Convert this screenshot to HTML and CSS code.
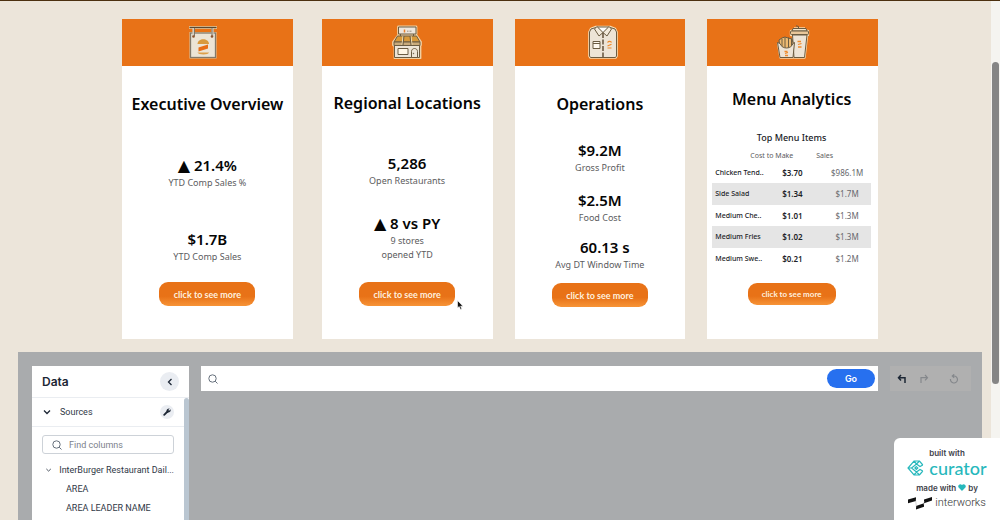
FILE: index.html
```html
<!DOCTYPE html>
<html lang="en">
<head>
<meta charset="utf-8">
<title>InterBurger Dashboard</title>
<link rel="stylesheet" href="styles.css">
</head>
<body>
<main class="page">
  <section class="cards">
    <article class="card card-executive">
      <header class="card-head">
        <svg width="30" height="34" viewBox="0 0 30 34" aria-hidden="true">
          <path d="M1 2.500h28" stroke="#f0c795" stroke-width="3"/>
          <path d="M1.500 2.500h27" stroke="#5b4a34" stroke-width="1.400"/>
          <rect x="1.500" y="7" width="27" height="26.500" fill="#f0d2a8"/>
          <rect x="2.500" y="8" width="25" height="24.500" fill="#ece4d6" stroke="#83796a" stroke-width="1.300"/>
          <path d="M5.500 3v8M24.500 3v8" stroke="#d3ccbe" stroke-width="2.200"/>
          <path d="M6.500 3v8M24 3v8" stroke="#6f6656" stroke-width=".8"/>
          <circle cx="5.500" cy="11.500" r="1.300" fill="#8b5430"/><circle cx="24" cy="11.500" r="1.300" fill="#8b5430"/>
          <path d="M9.500 19c.3-6.300 11.200-6.300 11.500 0z" fill="#d9993c"/>
          <path d="M10.500 22.500l9.500-3v4l-9.500 3z" fill="#e86d16"/>
          <path d="M9.500 27.500h11.500c0 2.600-11 2.600-11.500 0z" fill="#dda04a"/>
        </svg>
      </header>
      <div class="card-body">
        <h2>Executive Overview</h2>
        <div class="metric"><strong><span class="up">▲</span> 21.4%</strong><span>YTD Comp Sales %</span></div>
        <div class="metric"><strong>$1.7B</strong><span>YTD Comp Sales</span></div>
        <button class="more" type="button">click to see more</button>
      </div>
    </article>
    <article class="card card-regional">
      <header class="card-head">
        <svg width="30" height="34" viewBox="0 0 30 34" stroke="#6b5c42" stroke-width="1" stroke-linejoin="round" aria-hidden="true">
          <g stroke="#f1d0a2" stroke-width="2.800" fill="none"><path d="M6.500 2h17.500v7h-17.500zM6 11h18.500l4 6v3h-27v-3zM3 21v12h25v-12"/></g>
          <rect x="2.500" y="19" width="25" height="13.500" fill="#ede5d7"/>
          <rect x="6.500" y="2" width="17.500" height="7" fill="#eee6dc"/>
          <path d="M8.500 9v2M21.500 9v2"/>
          <path d="M5.500 11h19l3.500 6H2z" fill="#d99a3a"/>
          <path d="M2 17h26v3.500H2z" fill="#c9ab7b"/>
          <path d="M11 11l-1 9M19 11l1 9" fill="none" stroke="#f0dcb4"/>
          <path d="M12 11l-1 9M18 11l1 9" fill="none"/>
          <rect x="6" y="23.500" width="10" height="6" fill="#fff6e4"/>
          <path d="M19.500 32.500v-6c0-4 6-4 6 0v6z" fill="#eee5d7"/>
          <path d="M12.500 4.500v3" stroke="#e8802c" stroke-width="1.500"/><path d="M15 6.200h5" stroke="#958b7d" stroke-dasharray="1 .5"/>
          <circle cx="21.500" cy="28.500" r=".3"/>
        </svg>
      </header>
      <div class="card-body">
        <h2>Regional Locations</h2>
        <div class="metric"><strong>5,286</strong><span>Open Restaurants</span></div>
        <div class="metric"><strong><span class="up">▲</span> 8 vs PY</strong><span>9 stores<br>opened YTD</span></div>
        <button class="more" type="button">click to see more</button>
      </div>
    </article>
    <article class="card card-operations">
      <header class="card-head">
        <svg width="30" height="34" viewBox="0 0 30 34" stroke="#6b5c42" stroke-width="1" stroke-linejoin="round" aria-hidden="true">
          <path d="M8 2l-5 2-1.500 3v24l1 1.500h25l1-1.500V7l-1.500-3-5-2z" fill="#ede4d6" stroke="#f6dcb5" stroke-width="2.600"/>
          <path d="M8 2.500l-5 1.500-1.500 3v24l1 1.500h25l1-1.500V7l-1.500-3-5-1.500z" fill="#ede4d6"/>
          <path d="M9 2h12l-6 6z" fill="#fff"/>
          <path d="M9 1.500l6 6-4 3.500-4.500-7zM21 1.500l-6 6 4 3.500 4.500-7z" fill="#f3eadb"/>
          <path d="M15 8v24" stroke="#4f3b23" stroke-width="1.300" stroke-dasharray="5 1.500"/>
          <rect x="5" y="16.500" width="7" height="7" fill="#fff9ee"/><path d="M5 18.500h7"/>
          <path d="M19.500 17.500c1-1.500 3.500-1.500 4 0M19.500 21l4-1.700M19.500 23h4" stroke="#ef8a2b" stroke-width="1.200" fill="none"/>
        </svg>
      </header>
      <div class="card-body">
        <h2>Operations</h2>
        <div class="metric"><strong>$9.2M</strong><span>Gross Profit</span></div>
        <div class="metric"><strong>$2.5M</strong><span>Food Cost</span></div>
        <div class="metric metric-time"><strong>60.13 s</strong><span>Avg DT Window Time</span></div>
        <button class="more" type="button">click to see more</button>
      </div>
    </article>
    <article class="card card-menu">
      <header class="card-head">
        <svg width="34" height="34" viewBox="0 0 34 34" stroke="#6b5c42" stroke-width="1" stroke-linejoin="round" aria-hidden="true">
          <path d="M17 10l1.500 22.500h10L31 10zM15 6h17v4h-17zM2 18l2.500 14.500h13l1-14.500M18 3.500h11" fill="#ede4d6" stroke="#f6d8ae" stroke-width="2.400"/>
          <path d="M16.500 10l1.500 22.500h10.500L31 10z" fill="#ede4d6"/>
          <path d="M17 3.500h13l1 2.500H16z" fill="#f4e6cd"/>
          <rect x="14.500" y="6" width="18" height="3.500" rx="1" fill="#e8c79a"/>
          <path d="M22.500 3.500V1.500l-2.500-.7" fill="none"/>
          <path d="M4 24l-1-9 3-2 3-1 3 1 4 1 1 4-1 6z" fill="#eebb72"/>
          <path d="M6 14v9M9 12.500V24M12.500 12.500V24M15.500 14v9" fill="none"/>
          <path d="M1.500 17.500l2.500 1c2 6 11 6 13 0l1.500-1L17 32.500H4z" fill="#ede4d6"/>
          <path d="M8.500 26.500h3M9 28.500l3-1M9 30.500h3M21.500 16.500h3.500M22 19.500l3.500-1M22 22h3.500" stroke="#ef8a2b" stroke-width="1.300"/>
        </svg>
      </header>
      <div class="card-body">
        <h2>Menu Analytics</h2>
        <table>
          <caption>Top Menu Items</caption>
          <colgroup><col class="col-name"><col class="col-cost"><col></colgroup>
          <thead><tr><th scope="col" colspan="2" class="cost-head">Cost to Make</th><th scope="col" class="sales-head">Sales</th></tr></thead>
          <tbody>
            <tr><th scope="row">Chicken Tend..</th><td class="cost">$3.70</td><td class="sales">$986.1M</td></tr>
            <tr><th scope="row">Side Salad</th><td class="cost">$1.34</td><td class="sales">$1.7M</td></tr>
            <tr><th scope="row">Medium Che..</th><td class="cost">$1.01</td><td class="sales">$1.3M</td></tr>
            <tr><th scope="row">Medium Fries</th><td class="cost">$1.02</td><td class="sales">$1.3M</td></tr>
            <tr><th scope="row">Medium Swe..</th><td class="cost">$0.21</td><td class="sales">$1.2M</td></tr>
          </tbody>
        </table>
        <button class="more" type="button">click to see more</button>
      </div>
    </article>
  </section>

  <section class="explorer">
    <aside class="data">
      <header class="data-head">
        <h3>Data</h3>
        <button class="collapse" type="button" aria-label="Collapse"><svg width="8" height="8" viewBox="0 0 8 8"><path d="M5.500 1L2.500 4l3 3" fill="none" stroke="#1d2735" stroke-width="1.300"/></svg></button>
      </header>
      <div class="data-main">
        <div class="data-content">
          <div class="sources">
            <svg width="8" height="8" viewBox="0 0 8 8"><path d="M1 2.500l3 3 3-3" fill="none" stroke="#1d2735" stroke-width="1.300"/></svg>
            <span>Sources</span>
            <button class="tool" type="button" aria-label="Manage sources"><svg width="8" height="8" viewBox="0 0 8 8"><path d="M1.200 6.800L4.500 3.500" stroke="#1d2735" stroke-width="1.800" stroke-linecap="round"/><path d="M6.700.5L5.300 1.900l.8.800L7.500 1.300C8.300 3.600 6.200 5 4.300 4.200 2.500 2.700 4 0 6.700.5z" fill="#1d2735"/></svg></button>
          </div>
          <div class="tree">
            <label class="find">
              <svg width="10" height="10" viewBox="0 0 10 10"><circle cx="4.500" cy="4.500" r="3.700"/><path d="M7.200 7.200l2.300 2.300"/></svg>
              <input type="text" placeholder="Find columns" aria-label="Find columns">
            </label>
            <div class="table-name"><svg width="8" height="8" viewBox="0 0 8 8"><path d="M1.500 2.800L4 5.200l2.500-2.400" fill="none" stroke="#3a4350"/></svg><span>InterBurger Restaurant Dail...</span></div>
            <ul><li>AREA</li><li>AREA LEADER NAME</li></ul>
          </div>
        </div>
        <div class="data-scroll"></div>
      </div>
    </aside>
    <form class="search">
      <svg width="10" height="10" viewBox="0 0 10 10"><circle cx="4.500" cy="4.500" r="3.700"/><path d="M7.200 7.200l2.300 2.300"/></svg>
      <input type="text" aria-label="Search">
      <button type="button">Go</button>
    </form>
    <div class="history">
      <button type="button" aria-label="Undo"><svg width="10" height="10" viewBox="0 0 10 10"><path d="M4 1L1.500 3.700 4 6.400M1.500 3.700H8v5.300" fill="none" stroke="#1d2735" stroke-width="1.500"/></svg></button>
      <button type="button" aria-label="Redo"><svg width="10" height="10" viewBox="0 0 10 10"><path d="M6 1l2.500 2.700L6 6.400M8.500 3.700H2v5.300" fill="none" stroke="#85888c" stroke-width="1.200"/></svg></button>
      <button type="button" aria-label="Reset"><svg width="10" height="10" viewBox="0 0 10 10"><path d="M1.500 5A3.500 3.500 0 1 0 5 2H3.500M5.200.3L3.300 2l1.900 1.700" fill="none" stroke="#85888c" stroke-width="1.200"/></svg></button>
    </div>
  </section>
</main>
<div class="scrollbar"><div class="thumb"></div></div>
<aside class="badge">
  <span>built with</span>
  <a href="#" class="curator">
    <svg width="17" height="16" viewBox="0 0 17 16" fill="none" stroke="#27b8bc" stroke-width="1.200"><path d="M15.800 5L12.500 1H7L1 8l6 7h5.500l3.300-4M1 8h3.500M7 1l2.500 3M7 15l2.500-3M12.500 1L9.500 4M12.500 15l-3-3M15.800 5l-2.800 1.500L9.500 4 4.500 8l5 4 3.500-2.500 2.800 1.500"/><path d="M9.300 6.600L10.800 8 9.300 9.400 7.900 8z"/></svg>
    <span>curator</span>
  </a>
  <span>made with <svg width="8" height="7" viewBox="0 0 8 7"><path d="M4 7L.6 3.600C-.8 1.500 2-1.200 4 1c2-2.200 4.800.5 3.400 2.600z" fill="#27b8bc"/></svg> by</span>
  <a href="#" class="interworks">
    <svg width="24" height="14" viewBox="0 0 24 14"><path d="M0 3.500l8-2.200v3.800L0 7.300zM8 10l8-2.700v3.500L8 13.500zM16 3.500L24 1v3.600L16 7.300z" fill="#111"/><path d="M7.500 3.500l1 8M15.500 9l1-4" stroke="#999" stroke-width=".4"/></svg>
    <span>interworks</span>
  </a>
</aside>
<svg class="pointer" width="7" height="10" viewBox="0 0 7 10" aria-hidden="true"><path d="M.5.500v7.500l1.700-1.500 1.300 3 1.300-.6-1.200-2.700h2.400z" fill="#111" stroke="#fff" stroke-width=".6"/></svg>
</body>
</html>
```

FILE: styles.css
```css
* { box-sizing: border-box; }

body {
  margin: 0;
  background: #ece5da;
  color: #050505;
  font-family: "Noto Sans", sans-serif;
  overflow: hidden;
}

button { border: 0; padding: 0; cursor: pointer; font: inherit; }
input { border: 0; padding: 0; min-width: 0; width: 100%; font: inherit; background: none; outline: 0; }
h2, h3, ul { margin: 0; padding: 0; }

.page {
  min-height: 100vh;
  padding: 18px 18px 0;
  border-top: 1px solid #4c300f;
  display: flex;
  flex-direction: column;
}

/* Summary cards */
.cards { display: flex; gap: 22px; padding: 0 104px; }
.card { flex: 1 1 0; min-width: 0; display: flex; flex-direction: column; background: #fff; }
.card-executive { margin-right: 7px; }
.card-head { display: flex; justify-content: center; align-items: center; height: 47px; padding-bottom: 2px; background: #e87217; }
.card-executive .card-head { padding-right: 8px; }
.card-operations .card-head { padding-left: 7px; }
.card-body { flex: 1; min-height: 273px; display: flex; flex-direction: column; align-items: center; padding: 26px 6px 33px; }
.card-regional .card-body { padding-top: 25px; }
.card-operations .card-body { padding-bottom: 32px; }
.card-menu .card-body { padding: 21px 7px 34px 5px; }

h2 { font-size: 16px; line-height: 24px; font-weight: 600; white-space: nowrap; }

.metric { text-align: center; display: flex; flex-direction: column; gap: 1px; color: #5c5c60; font-size: 9px; line-height: 14px; }
.metric strong { font-size: 15px; line-height: 20px; font-weight: 600; color: #050505; white-space: nowrap; }
.up { font-family: "DejaVu Sans", sans-serif; font-size: 16px; line-height: 16px; }
.card-executive .metric { margin-top: 39px; }
.card-regional .metric { margin-top: 38px; }
.card-operations .metric { margin-top: 24px; }
.card-regional .metric + .metric { margin-top: 25px; }
.card-operations .metric + .metric { margin-top: 15px; }
.card-operations .metric + .metric-time { margin-top: 12px; }
.metric-time strong { padding-left: 10px; }

.more {
  margin-top: auto;
  width: 96px;
  height: 24px;
  border-radius: 9px;
  background: linear-gradient(#e87217 60%, #f79437);
  color: #fff0df;
  font-family: Lato, sans-serif;
  font-size: 9px;
  font-weight: 700;
}
.card-menu .more { width: 88px; height: 22px; font-size: 8px; }

table { width: 100%; margin-top: 19px; border-collapse: collapse; table-layout: fixed; color: #202226; }
.col-name { width: 38%; }
.col-cost { width: 25%; }
caption { font-size: 9px; line-height: 16px; font-weight: 500; }
th, td { padding: 0; font-size: 8px; line-height: 16px; white-space: nowrap; }
thead th { padding-top: 4px; font-size: 7px; font-weight: 400; color: #5c5c60; line-height: 12px; }
thead .cost-head { text-align: right; padding-right: 19px; }
thead .sales-head { text-align: left; padding-left: 4px; }
tbody th { text-align: left; padding-left: 3px; font-size: 7px; font-weight: 500; }
tbody td { text-align: center; }
tbody tr { height: 21px; }
tbody tr:nth-child(even) { height: 22px; background: #e5e5e5; }
.cost { font-weight: 600; }
.sales { color: #66686c; padding-left: 11px; }

/* Data explorer */
.explorer {
  flex: 1;
  display: flex;
  align-items: flex-start;
  gap: 12px;
  margin-top: 13px;
  padding: 14px 11px 0 14px;
  background: #a9abad;
  font-family: Inter, sans-serif;
}
.data { align-self: stretch; flex: 0 0 157px; min-width: 0; display: flex; flex-direction: column; background: #fff; color: #303846; }
.data-head { display: flex; align-items: center; justify-content: space-between; height: 32px; padding: 0 10px; border-bottom: 1px solid #eaedf1; }
h3 { font-size: 12px; font-weight: 600; color: #1d2735; }
.collapse, .tool { display: flex; align-items: center; justify-content: center; border-radius: 50%; background: #eaedf2; }
.collapse { width: 19px; height: 19px; }
.tool { width: 14px; height: 14px; margin-left: auto; }
.data-main { flex: 1; display: flex; font-family: Roboto, sans-serif; font-size: 9px; }
.data-content { flex: 1; min-width: 0; }
.data-scroll { flex: none; width: 5px; border-radius: 3px 3px 0 0; background: #bac6d1; }
.sources { display: flex; align-items: center; gap: 9px; height: 29px; padding: 0 10px 0 11px; border-bottom: 1px solid #eaedf1; }
.tree { padding: 8px 10px 0; }
.find { display: flex; align-items: center; gap: 7px; height: 19px; padding: 0 9px; border: 1px solid #cdd2d8; border-radius: 3px; }
.find svg, .search svg { flex: none; fill: none; stroke: #66707c; }
.find input { flex: 1; }
.find input::placeholder { color: #7b818b; opacity: 1; }
.table-name { display: flex; align-items: center; gap: 7px; padding-left: 3px; margin-top: 6px; line-height: 20px; white-space: nowrap; }
ul { list-style: none; padding-left: 24px; line-height: 19px; white-space: nowrap; }

.search { flex: 1; display: flex; align-items: center; height: 25px; padding: 0 3px 0 7px; background: #fff; }
.search input { flex: 1; height: 20px; font-size: 10px; padding-left: 6px; }
.search button { width: 48px; height: 19px; border-radius: 10px; background: #2770ef; color: #fff; font-size: 9px; font-weight: 600; }
.history { flex: 0 0 81px; display: flex; align-items: center; gap: 12px; height: 25px; padding-left: 7px; background: #b0b0b0; }
.history button { display: flex; background: none; }
.history button:last-child { margin-left: 8px; }

/* Window overlays */
.scrollbar { position: fixed; top: 1px; right: 0; bottom: 0; width: 9px; background: #f5f4f0; }
.thumb { height: 62%; margin: 61px 1px 0; border-radius: 4px; background: #858585; }
.pointer { position: absolute; left: 457px; top: 300px; }
.badge {
  position: fixed;
  right: 0;
  bottom: 0;
  width: 106px;
  padding: 8px 12px 9px;
  display: flex;
  flex-direction: column;
  align-items: center;
  border-radius: 6px 0 0;
  background: #fff;
  color: #3d4148;
  font-family: Inter, sans-serif;
  font-size: 8px;
  line-height: 14px;
  font-weight: 600;
  white-space: nowrap;
}
.badge a { display: flex; align-items: center; text-decoration: none; }
.curator { gap: 5px; height: 16px; margin-bottom: 5px; color: #27b8bc; font-family: Lato, sans-serif; font-size: 18px; font-weight: 500; }
.interworks { gap: 3px; height: 16px; color: #333; font-family: Roboto, sans-serif; font-size: 11px; font-weight: 300; }
```
